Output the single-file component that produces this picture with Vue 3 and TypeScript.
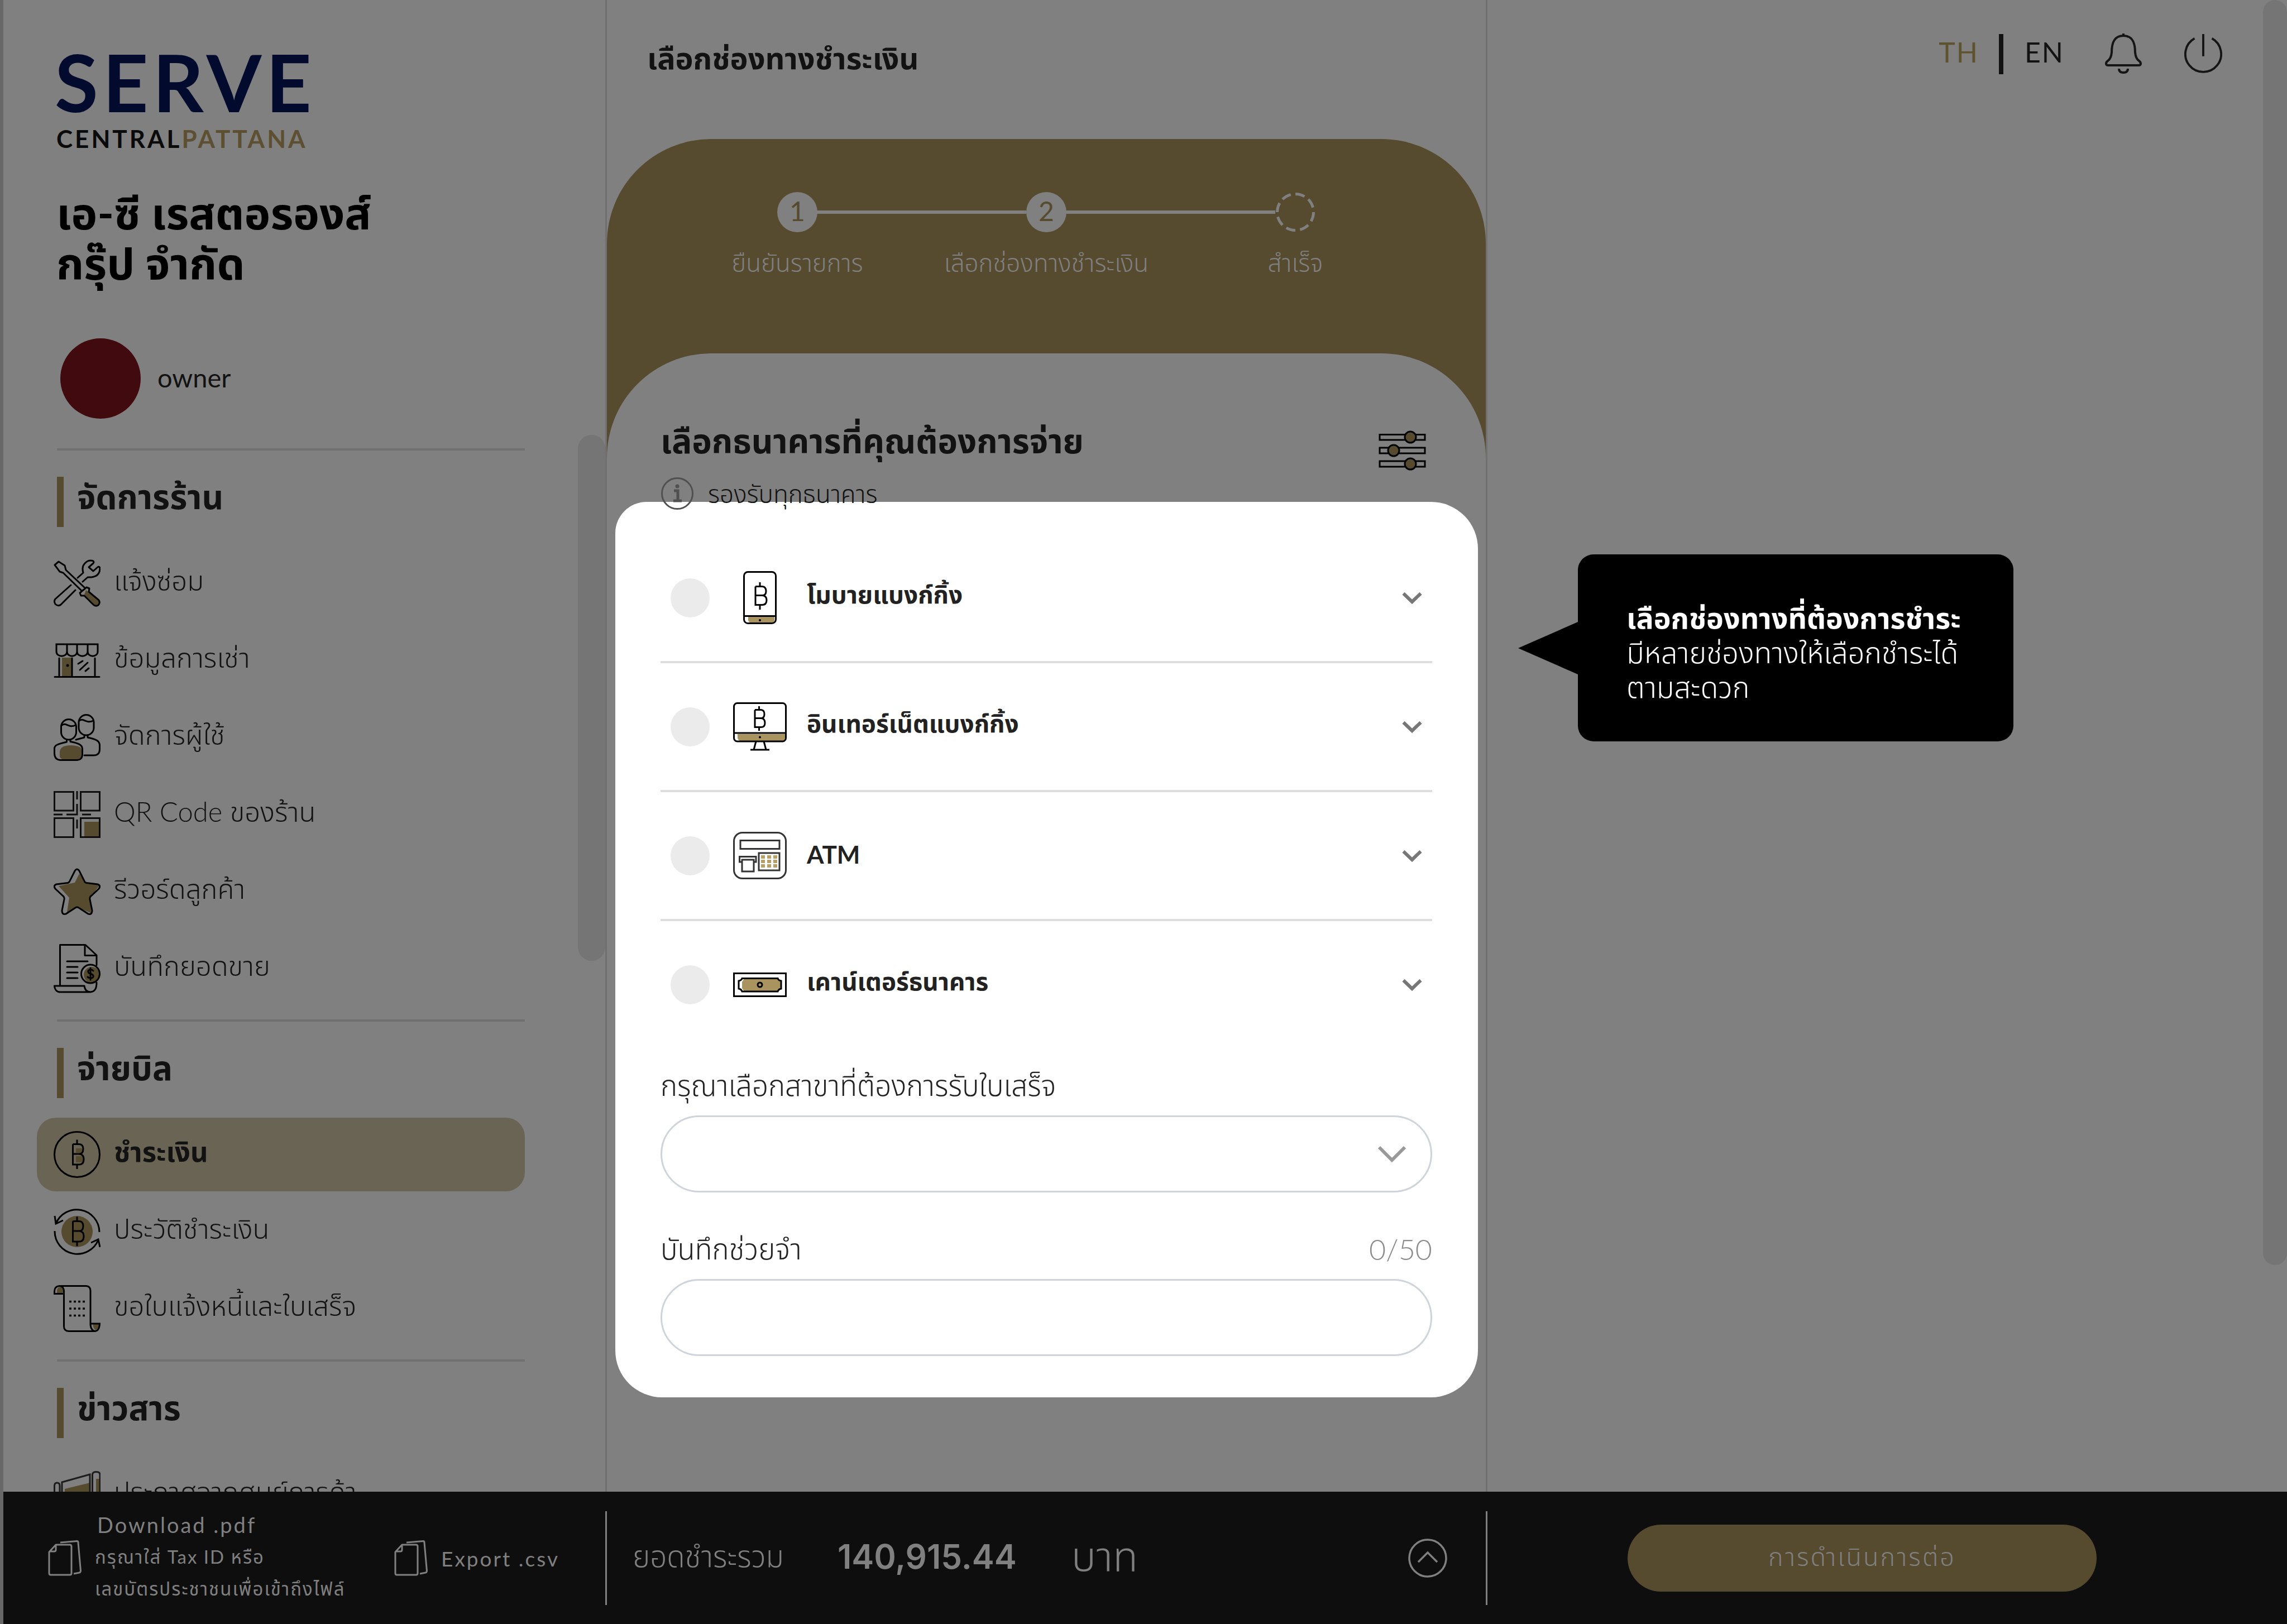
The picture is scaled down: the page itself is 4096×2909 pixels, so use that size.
<script setup lang="ts">
import { ref } from 'vue'

interface NavItem {
  icon: string
  label: string
  active?: boolean
}
interface NavSection {
  title: string
  items: NavItem[]
}
interface PayMethod {
  id: string
  icon: string
  width: number
  height: number
  label: string
}

const sections: NavSection[] = [
  {
    title: 'จัดการร้าน',
    items: [
      { icon: 'tools', label: 'แจ้งซ่อม' },
      { icon: 'store', label: 'ข้อมูลการเช่า' },
      { icon: 'users', label: 'จัดการผู้ใช้' },
      { icon: 'qr', label: 'QR Code ของร้าน' },
      { icon: 'star', label: 'รีวอร์ดลูกค้า' },
      { icon: 'sales', label: 'บันทึกยอดขาย' },
    ],
  },
  {
    title: 'จ่ายบิล',
    items: [
      { icon: 'baht', label: 'ชำระเงิน', active: true },
      { icon: 'history', label: 'ประวัติชำระเงิน' },
      { icon: 'bill', label: 'ขอใบแจ้งหนี้และใบเสร็จ' },
    ],
  },
  {
    title: 'ข่าวสาร',
    items: [{ icon: 'poster', label: 'ประกาศจากศูนย์การค้า' }],
  },
]

const steps = ['ยืนยันรายการ', 'เลือกช่องทางชำระเงิน', 'สำเร็จ']

const methods: PayMethod[] = [
  { id: 'mobile', icon: 'phone', width: 60, height: 95, label: 'โมบายแบงก์กิ้ง' },
  { id: 'internet', icon: 'monitor', width: 96, height: 87, label: 'อินเทอร์เน็ตแบงก์กิ้ง' },
  { id: 'atm', icon: 'atm', width: 96, height: 85, label: 'ATM' },
  { id: 'counter', icon: 'banknote', width: 96, height: 44, label: 'เคาน์เตอร์ธนาคาร' },
]

const method = ref('')
const branch = ref('')
const memo = ref('')
</script>

<template>
  <div class="page">
    <svg class="defs" width="0" height="0" aria-hidden="true">
      <symbol id="tools" viewBox="0 0 84 84">
        <g fill="none" stroke="#000" stroke-width="3" stroke-linejoin="round" stroke-linecap="round">
          <path d="M58 54 L82 74 Q84 78 80 81 Q76 84 71 80 L54 65 Z" fill="#574b2f" stroke="none" />
          <path d="M56 50 L22 18 L20 10 L9 3 L2 9 L11 21 L17 23 L50 55" />
          <path d="M47 59 L59 49 L64 51 L63 57 L81 72 Q84 77 80 81 Q75 84 71 80 L55 64 L49 64 Z" />
          <path d="M43 32 L53 23 Q50 12 56 6 Q63 -1 71 2 Q73 4 71 6 L63 13 L71 20 L80 12 Q83 12 83 16 Q82 32 61 31 L52 39" />
          <path d="M31 45 L3 70 Q0 74 3 79 Q8 84 13 80 L39 54" />
        </g>
      </symbol>
      <symbol id="store" viewBox="0 0 84 62">
        <path d="M15 26H32V60H15Z" fill="#574b2f" />
        <g fill="none" stroke="#000" stroke-width="3" stroke-linecap="round">
          <path d="M5 2H79V15C79 26 61 26 61 15C61 26 42 26 42 15C42 26 24 26 24 15C24 26 5 26 5 15ZM24 2V15M42 2V15M61 2V15" />
          <path d="M10 27V60M33 27V60M74 27V60M2 60.500H82M44 37L52 32M47 48L61 35M57 50L63 45" />
        </g>
        <circle cx="25" cy="40" r="2.500" />
      </symbol>
      <symbol id="users" viewBox="0 0 84 84">
        <path d="M11 70Q10 56 31 56Q50 57 50 64V74Q49 81 42 81H16Q12 80 11 76Z" fill="#574b2f" />
        <g fill="none" stroke="#000" stroke-width="3" stroke-linecap="round" stroke-linejoin="round">
          <rect x="45" y="1.500" width="27" height="36.500" rx="13.500" />
          <path d="M46 12C54 6 58 18 71 12" />
          <path d="M55 38V42L40 46M61 38V42C76 45 82.500 48 82.500 56V64Q82 74 72 74H55" />
          <rect x="13.500" y="9.500" width="27" height="36.500" rx="13.500" />
          <path d="M15 20C23 14 27 26 39 20" />
          <path d="M23.500 46V50C6 54 1.500 56 1.500 62V71Q2 82 12 82.500H42Q51 82 51.500 73V62C51 55 44 52 30 49.500V46" />
        </g>
      </symbol>
      <symbol id="qr" viewBox="0 0 84 84">
        <path d="M55 55H82V82H55Z" fill="#574b2f" />
        <path d="M1.500 1.500H35.500V35H1.500ZM48.500 1.500H82.500V35H48.500ZM1.500 48.500H35.500V82.500H1.500ZM48.500 48.500H82.500V82.500H48.500ZM42 0V15M42 23V42H23M0 42H16M51 42H67M42 51V67" fill="none" stroke="#0e0e0e" stroke-width="3" />
      </symbol>
      <symbol id="star" viewBox="0 0 84 84">
        <path d="M46 10L56 25L82 31L65 53L68 81L42 70L24 79L28 53L9 32L38 26Z" fill="#574b2f" />
        <path d="M38 5Q42 -1 46 5L55 23Q56 26 59 26.500L79 29Q85 31 81 37L66 51Q64.500 53 65 56L69 76Q69 84 62 82L45 71Q42 69 39 71L22 82Q15 84 15 76L19 56Q19.500 53 18 51L3 37Q-1 31 5 29L25 26.500Q28 26 29 23Z" fill="none" stroke="#000" stroke-width="3" />
      </symbol>
      <symbol id="sales" viewBox="0 0 84 88">
        <circle cx="68" cy="55" r="14" fill="#574b2f" />
        <g fill="none" stroke="#000" stroke-width="3" stroke-linejoin="round" stroke-linecap="round">
          <path d="M11.500 74V1.500H57L77 20V38M56 2V20.500H77M24 31H61M24 41H43M24 51H43M24 61H43" />
          <circle cx="66" cy="53.500" r="16.500" />
          <path d="M1.500 75H55C56 82 59 86 66 86M1.500 75C2 82 6 86 12 86H66C74 85 77 80 77 69" />
          <path d="M71 48Q66 43 62 48Q61 52 66 53Q72 55 71 59Q67 64 61 59M66 43V64" />
        </g>
      </symbol>
      <symbol id="baht" viewBox="0 0 84 84">
        <path d="M40 31H51Q53 35 50 39H40ZM40 45H52Q55 50 52 56H40Z" fill="#574b2f" />
        <g fill="none" stroke="#000" stroke-width="3">
          <circle cx="42" cy="42" r="40.500" />
          <path d="M34.500 23.500H46Q53 24 53 32Q53 41 46 41H34.500M46 41Q54 42 54 50Q54 60 46 60H34.500V23.500M42 15.500V23M42 60V68" />
        </g>
      </symbol>
      <symbol id="history" viewBox="0 0 84 84">
        <circle cx="42" cy="42" r="28" fill="#574b2f" />
        <g fill="none" stroke="#000" stroke-width="3">
          <path d="M34.500 23.500H46Q53 24 53 32Q53 41 46 41H34.500M46 41Q54 42 54 50Q54 60 46 60H34.500V23.500M42 15.500V23M42 60V68" />
          <path d="M82 43A40.500 40.500 0 0 0 4 28M2 14L4 28L17 22M2 41A40.500 40.500 0 0 0 80 57M67 62L80 56L83 70" />
        </g>
      </symbol>
      <symbol id="bill" viewBox="0 0 84 84">
        <path d="M6 15V9Q7 4 12 3Q18 5 18 15ZM70 69H82Q82 79 75 80Q71 78 70 69Z" fill="#574b2f" />
        <path d="M18.500 15.500H1.500V11Q2 2 10 1.500H58Q66 2 66 10V69H82.500Q82 82 74 82.500H27Q18.500 82 18.500 74V10Q18 3 12 1.500M66 69Q66 81 74 82.500" fill="none" stroke="#000" stroke-width="3" />
        <path d="M28 29.500H56M28 42H56M28 54.500H56" stroke="#000" stroke-width="3.500" stroke-dasharray="4 4" />
      </symbol>
      <symbol id="poster" viewBox="0 0 84 84">
        <path d="M20 32L65 21V70H20Z" fill="#574b2f" />
        <path d="M76 14H82V80H76Z" fill="#574b2f" />
        <g fill="none" stroke="#1c1c1c" stroke-width="3">
          <path d="M15 80V20L65 6V66M69.500 80V6Q70 1.500 76 1.500Q83 1.500 83 6V80ZM1.500 80V26Q2 21 6 21Q11 21 11 26V80Z" />
        </g>
      </symbol>
      <symbol id="phone" viewBox="0 0 60 95">
        <path d="M9 82H56V88Q55 93 50 93H14Q10 92 9 88Z" fill="#a9935f" />
        <rect x="1.500" y="1.500" width="57" height="92" rx="7" fill="none" stroke="#000" stroke-width="3" />
        <path d="M1 80.500H59M22 27.500H34Q41 28 41 36Q41 43.500 34 43.500H22M34 43.500Q42 44 42 52Q42 60.500 34 60.500H22V27.500M30 20V27M30 60V69" fill="none" stroke="#000" stroke-width="3" />
        <circle cx="30" cy="88" r="2" />
      </symbol>
      <symbol id="monitor" viewBox="0 0 96 87">
        <path d="M8 57H93V64Q92 69 88 69H12Q9 68 8 64Z" fill="#a9935f" />
        <rect x="1.500" y="1.500" width="93" height="68.500" rx="6" fill="none" stroke="#000" stroke-width="3" />
        <path d="M1 55H95M39 13.500H50Q56 14 56 21Q56 28.500 50 28.500H39M50 28.500Q57 29 57 37Q57 44.500 50 44.500H39V13.500M46.500 7V13M46.500 44V51M41 70L37 85M55 70L59 85M31 85H65" fill="none" stroke="#000" stroke-width="3" />
        <circle cx="48" cy="62.500" r="2" />
      </symbol>
      <symbol id="atm" viewBox="0 0 96 85">
        <g fill="none" stroke="#333" stroke-width="3">
          <rect x="1.500" y="1.500" width="93" height="82" rx="15" />
          <rect x="13" y="15.500" width="70" height="15" />
          <rect x="46" y="38" width="37" height="31" />
          <path d="M16 54H11.500V44.500H41V54H37M16 50H37V71H16Z" />
        </g>
        <path d="M50 45H79M50 53H79M50 61H79" stroke="#b79f66" stroke-width="6" stroke-dasharray="7 4" />
      </symbol>
      <symbol id="banknote" viewBox="0 0 96 44">
        <path d="M20 11H80L85 17V28L80 34H20L16 28V17Z" fill="#a9935f" />
        <g fill="none" stroke="#000" stroke-width="3">
          <rect x="1.500" y="1.500" width="93" height="41" />
          <path d="M16 10.500H80Q81 14 86 15V29Q81 30 80 34H16Q15 30 10 29V15Q15 14 16 10.500Z" />
          <circle cx="48" cy="22" r="4" />
        </g>
      </symbol>
      <symbol id="files" viewBox="0 0 60 64">
        <path d="M14 8H39Q42 8 42 11V59Q42 62 39 62H5Q2 62 2 59V21ZM14 8V17Q14 20 11 20H3M22 4L52 1.500Q54 1.500 54 4L58.500 55Q58 58 56 58L46 60" fill="none" stroke="#808080" stroke-width="3" stroke-linejoin="round" />
      </symbol>
      <symbol id="caret" viewBox="0 0 36 22">
        <path d="M2.500 3L18 18L33.500 3" fill="none" stroke="#777" stroke-width="6" />
      </symbol>
    </svg>

    <div class="columns">
      <aside class="sidebar">
        <div class="brand">
          <div class="brand-name">SERVE</div>
          <div class="brand-sub">CENTRAL<span>PATTANA</span></div>
        </div>
        <h2 class="company">เอ-ซี เรสตอรองส์<br />กรุ๊ป จำกัด</h2>
        <div class="user">
          <span class="avatar"></span>
          <span>owner</span>
        </div>
        <nav>
          <section v-for="section in sections" :key="section.title" class="nav-section">
            <h3>{{ section.title }}</h3>
            <ul>
              <li v-for="item in section.items" :key="item.label">
                <a href="#" :class="{ active: item.active }">
                  <svg class="nav-icon" aria-hidden="true"><use :href="'#' + item.icon" /></svg>
                  <span>{{ item.label }}</span>
                </a>
              </li>
            </ul>
          </section>
        </nav>
        <div class="side-thumb"></div>
      </aside>

      <main class="payment">
        <h1>เลือกช่องทางชำระเงิน</h1>
        <div class="banner">
          <ol class="steps">
            <li v-for="(step, i) in steps" :key="step">
              <span v-if="i < 2" class="dot">{{ i + 1 }}</span>
              <svg v-else class="dot-next" viewBox="0 0 72 72" aria-hidden="true">
                <circle cx="36" cy="36" r="32.500" fill="none" stroke="#808080" stroke-width="5" stroke-dasharray="17 8.500" />
              </svg>
              <span class="step-label">{{ step }}</span>
            </li>
          </ol>
        </div>
        <div class="panel">
          <div class="panel-head">
            <h2>เลือกธนาคารที่คุณต้องการจ่าย</h2>
            <button class="filter" type="button" aria-label="ตัวกรอง">
              <svg viewBox="0 0 85 72" aria-hidden="true">
                <path d="M2 7.500H83V17H2ZM2 31H83V41H2ZM2 55H83V65H2Z" fill="none" stroke="#000" stroke-width="3" />
                <g fill="#574b2f" stroke="#000" stroke-width="3">
                  <circle cx="57" cy="12" r="10" />
                  <circle cx="27" cy="36" r="10" />
                  <circle cx="57" cy="60" r="10" />
                </g>
              </svg>
            </button>
          </div>
          <p class="note">
            <svg viewBox="0 0 58 58" aria-hidden="true">
              <circle cx="29" cy="29" r="27.500" fill="none" stroke="#505050" stroke-width="3" />
              <circle cx="29" cy="16" r="3.500" fill="#505050" />
              <path d="M23 24H30V41M22 42H37" fill="none" stroke="#505050" stroke-width="5" />
            </svg>
            <span>รองรับทุกธนาคาร</span>
          </p>
          <form class="card" @submit.prevent>
            <ul class="methods">
              <li v-for="m in methods" :key="m.id">
                <input :id="m.id" v-model="method" type="radio" name="method" :value="m.id" />
                <label :for="m.id">
                  <span class="method-icon">
                    <svg :width="m.width" :height="m.height" aria-hidden="true"><use :href="'#' + m.icon" /></svg>
                  </span>
                  <span class="method-name">{{ m.label }}</span>
                </label>
                <button type="button" class="expand" :aria-label="m.label">
                  <svg aria-hidden="true"><use href="#caret" /></svg>
                </button>
              </li>
            </ul>
            <div class="field">
              <label for="branch">กรุณาเลือกสาขาที่ต้องการรับใบเสร็จ</label>
              <div class="select-wrap">
                <select id="branch" v-model="branch"></select>
                <svg viewBox="0 0 52 31" aria-hidden="true"><path d="M3 3L26 26L49 3" fill="none" stroke="#999" stroke-width="6" /></svg>
              </div>
            </div>
            <div class="field">
              <div class="field-head">
                <label for="memo">บันทึกช่วยจำ</label>
                <span class="count">{{ memo.length }}/50</span>
              </div>
              <input id="memo" v-model="memo" type="text" maxlength="50" />
            </div>
          </form>
        </div>
      </main>

      <div class="rest">
        <header>
          <div class="langs">
            <a href="#" class="current">TH</a>
            <a href="#">EN</a>
          </div>
          <button type="button" aria-label="การแจ้งเตือน">
            <svg viewBox="0 0 66 73" aria-hidden="true">
              <path d="M33 0V4M6 57Q2 57 2 54Q2 51 5 49Q11 45 12 34C12 16 17 4 33 4S54 16 54 34Q55 45 61 49Q64 51 64 54Q64 57 60 57ZM25 63Q25 70 33 70T41 63" fill="none" stroke="#151515" stroke-width="4" stroke-linejoin="round" />
            </svg>
          </button>
          <button type="button" aria-label="ออกจากระบบ">
            <svg viewBox="0 0 70 73" aria-hidden="true">
              <path d="M19 8A33 33 0 1 0 51 8M35 0V41" fill="none" stroke="#151515" stroke-width="4" />
            </svg>
          </button>
        </header>
        <div class="tip" role="tooltip">
          <strong>เลือกช่องทางที่ต้องการชำระ</strong>
          <span>มีหลายช่องทางให้เลือกชำระได้</span>
          <span>ตามสะดวก</span>
        </div>
        <div class="page-thumb"></div>
      </div>
    </div>

    <footer class="bar">
      <div class="exports">
        <a href="#" class="export">
          <svg aria-hidden="true"><use href="#files" /></svg>
          <span class="pdf">
            <span class="pdf-title">Download .pdf</span>
            <small>กรุณาใส่ Tax ID หรือ</small>
            <small>เลขบัตรประชาชนเพื่อเข้าถึงไฟล์</small>
          </span>
        </a>
        <a href="#" class="export csv">
          <svg aria-hidden="true"><use href="#files" /></svg>
          <span>Export .csv</span>
        </a>
      </div>
      <div class="total">
        <span class="total-label">ยอดชำระรวม</span>
        <strong>140,915.44</strong>
        <span class="unit">บาท</span>
        <button type="button" aria-label="รายละเอียด">
          <svg viewBox="0 0 70 70" aria-hidden="true">
            <g fill="none" stroke="#808080" stroke-width="3.500">
              <circle cx="35" cy="35" r="33" />
              <path d="M18 42L35 25L52 42" />
            </g>
          </svg>
        </button>
      </div>
      <div class="action">
        <button type="button">การดำเนินการต่อ</button>
      </div>
    </footer>
  </div>
</template>

<style>
body {
  background: #808080;
}
</style>

<style scoped>
.page {
  --line: #707070;
  --gold: #574b2f;
  --mute: #808080;
  --ink: #121212;
  --light: 350;
  display: flex;
  flex-direction: column;
  height: 100vh;
  box-sizing: border-box;
  border-left: 6px solid #686868;
  background: #808080;
  color: var(--ink);
  font-family: Lato, "Noto Sans Thai", "Noto Sans", sans-serif;
  font-size: 48px;
  overflow: hidden;
}
.defs { position: absolute; }
h1, h2, h3, p, ul, ol { margin: 0; padding: 0; }
ul, ol { list-style: none; }
a { color: inherit; text-decoration: none; }
button { padding: 0; border: 0; background: none; font: inherit; color: inherit; display: block; }
svg { display: block; flex: none; }

.columns {
  flex: 1;
  min-height: 0;
  display: grid;
  grid-template-columns: 1081fr 1577fr 1432fr;
}
.sidebar {
  position: relative;
  min-height: 0;
  overflow: hidden;
  padding: 76px 144px 0 60px;
  border-right: 3px solid var(--line);
  box-sizing: border-box;
}
.brand { padding-left: 32px; height: 196px; }
.brand-name { font-size: 142px; line-height: 140px; font-weight: 700; color: #020a2e; letter-spacing: 8px; }
.brand-sub { margin-top: 4px; padding-left: 3px; font-size: 44px; line-height: 56px; font-weight: 700; color: #0a0a0a; letter-spacing: 4px; }
.brand-sub span { color: #5d5032; }
.company { margin: 64px 0 0 35px; font-size: 79px; line-height: 90px; font-weight: 700; color: #000; }
.user { display: flex; align-items: center; gap: 30px; margin: 90px 0 53px 42px; font-size: 47px; line-height: 56px; font-weight: 400; }
.user span + span { padding-bottom: 4px; }
.avatar { width: 144px; height: 144px; border-radius: 50%; background: #400a0e; }
.nav-section { padding-bottom: 22px; }
.nav-section::before { content: ""; display: block; height: 4px; margin-left: 36px; background: var(--line); }
.nav-section h3 {
  margin: 47px 0 32px 36px;
  padding: 0 0 20px 24px;
  border-left: 12px solid var(--gold);
  font-size: 60px;
  line-height: 70px;
  font-weight: 700;
}
.nav-section a {
  display: flex;
  align-items: center;
  gap: 24px;
  height: 132px;
  margin: 3px 0;
  padding-left: 30px;
  border-radius: 34px;
  font-size: 49px;
  font-weight: var(--light);
}
.nav-section a span { padding-bottom: 5px; }
.nav-section li { display: flow-root; }
.nav-section a.active { background: #6a6454; font-weight: 700; }
.nav-icon { width: 84px; height: 88px; }
.side-thumb { position: absolute; right: 0; top: 779px; width: 49px; height: 942px; border-radius: 25px; background: #757575; }

.payment { min-width: 0; border-right: 3px solid var(--line); }
.payment h1 { padding: 66px 72px 0; height: 183px; font-size: 54px; line-height: 76px; font-weight: 700; }
.banner { height: 384px; padding: 95px 0 92px; border-radius: 187px 187px 0 0; background: var(--gold); }
.steps { display: grid; grid-template-columns: repeat(3, 446px); justify-content: center; }
.steps li { position: relative; display: flex; flex-direction: column; align-items: center; }
.steps li:not(:last-child)::after { content: ""; position: absolute; left: 50%; top: 33px; width: 410px; height: 6px; background: var(--mute); }
.dot { z-index: 1; width: 72px; height: 72px; border-radius: 50%; background: var(--mute); color: var(--gold); text-align: center; font-size: 48px; line-height: 68px; font-weight: 400; }
.dot-next { width: 72px; height: 72px; }
.step-label { margin-top: 26px; font-size: 44px; line-height: 56px; font-weight: var(--light); color: var(--mute); white-space: nowrap; }
.panel { margin-top: -187px; padding-top: 108px; border-radius: 187px 187px 0 0; background: #808080; }
.panel-head { display: flex; justify-content: space-between; padding: 0 107px 0 96px; }
.panel-head h2 { font-size: 60px; line-height: 96px; font-weight: 700; }
.filter svg { width: 85px; height: 72px; margin-top: 30px; }
.note { position: relative; z-index: 1; display: flex; align-items: center; gap: 26px; height: 58px; margin: 12px 0 -14px 97px; font-size: 44px; line-height: 58px; font-weight: var(--light); }
.note svg { width: 58px; height: 58px; }
.card { margin: 0 14px 0 15px; padding: 58px 82px 74px 81px; border-radius: 56px 84px 84px 84px; background: #fff; color: #222; }
.methods { margin-bottom: 27px; }
.methods li { display: flex; align-items: center; height: 227px; padding: 0 18px; border-bottom: 4px solid #dedede; }
.methods li:last-child { border-bottom-color: transparent; }
.methods input { appearance: none; margin: 0; width: 70px; height: 70px; border-radius: 50%; background: #ebebeb; }
.methods input:checked { background: #a9935f; }
.methods label { flex: 1; display: flex; align-items: center; gap: 36px; margin-left: 42px; font-weight: 700; font-size: 44px; }
.method-icon { width: 96px; display: flex; justify-content: center; }
.method-name { padding-bottom: 6px; }
.expand svg { width: 36px; height: 22px; }
.field label { font-size: 51px; line-height: 72px; font-weight: var(--light); }
.field > label { display: block; }
.field { margin-bottom: 65px; }
.field:last-child { margin-bottom: 0; }
.field-head { display: flex; justify-content: space-between; }
.count { font-size: 52px; line-height: 72px; font-weight: 300; color: #8c8c8c; }
.select-wrap { position: relative; margin-top: 18px; }
.field select, .field > input {
  appearance: none;
  display: block;
  width: 100%;
  height: 138px;
  box-sizing: border-box;
  padding: 0 60px;
  border: 3px solid #cfd3da;
  border-radius: 69px;
  background: #fff;
  font: inherit;
}
.field > input { margin-top: 18px; }
.select-wrap svg { position: absolute; right: 46px; top: 54px; width: 52px; height: 31px; }

.rest { position: relative; min-width: 0; }
.rest header { display: flex; justify-content: flex-end; align-items: center; padding: 60px 116px 0 0; }
.langs { display: flex; font-size: 50px; line-height: 64px; font-weight: 400; letter-spacing: 2px; }
.langs a { padding-bottom: 8px; }
.langs a + a { margin-left: 36px; padding-left: 38px; border-left: 8px solid var(--ink); }
.langs .current { color: #5f522f; }
.rest header button { margin-left: 75px; }
.rest header .langs + button { margin-left: 72px; }
.rest header svg { height: 73px; width: 68px; }
.tip { position: absolute; left: 162px; top: 993px; padding: 82px 94px 67px 87px; border-radius: 28px; background: #000; color: #fff; font-size: 52px; line-height: 62px; }
.tip strong, .tip span { display: block; white-space: nowrap; }
.tip span { font-weight: var(--light); }
.tip::before { content: ""; position: absolute; right: 100%; top: 121px; border: solid transparent; border-width: 47px 107px 47px 0; border-right-color: #000; }
.page-thumb { position: absolute; right: 0; top: 0; width: 43px; height: 2266px; border-radius: 22px; background: #757575; }

.bar { flex: none; display: grid; grid-template-columns: 1081fr 1577fr 1432fr; height: 237px; background: #0e0e0e; color: var(--mute); }
.exports, .total { display: flex; align-items: center; height: 168px; margin-top: 35px; border-right: 3px solid var(--mute); min-width: 0; }
.exports { justify-content: space-between; padding: 0 82px 0 80px; }
.export { display: flex; align-items: center; gap: 24px; font-size: 38px; letter-spacing: 3px; }
.export.csv { font-size: 37px; }
.export svg { width: 60px; height: 64px; }
.pdf { display: flex; flex-direction: column; padding-bottom: 6px; line-height: 57px; white-space: nowrap; }
.pdf-title { padding-left: 4px; }
.pdf small { font-size: 33px; letter-spacing: 2px; }
.total { padding: 0 69px 0 46px; }
.total-label { font-size: 53px; font-weight: var(--light); }
.total strong { margin-left: 96px; padding-bottom: 6px; font-family: Inter, Lato, sans-serif; font-size: 60px; font-weight: 600; }
.unit { margin-left: 98px; font-size: 74px; font-weight: var(--light); }
.total button { margin-left: auto; }
.total button svg { width: 70px; height: 70px; }
.action { display: flex; align-items: center; padding-left: 251px; }
.action button { width: 840px; height: 120px; border-radius: 60px; background: var(--gold); text-align: center; font-size: 45px; font-weight: var(--light); letter-spacing: 3px; }
</style>
